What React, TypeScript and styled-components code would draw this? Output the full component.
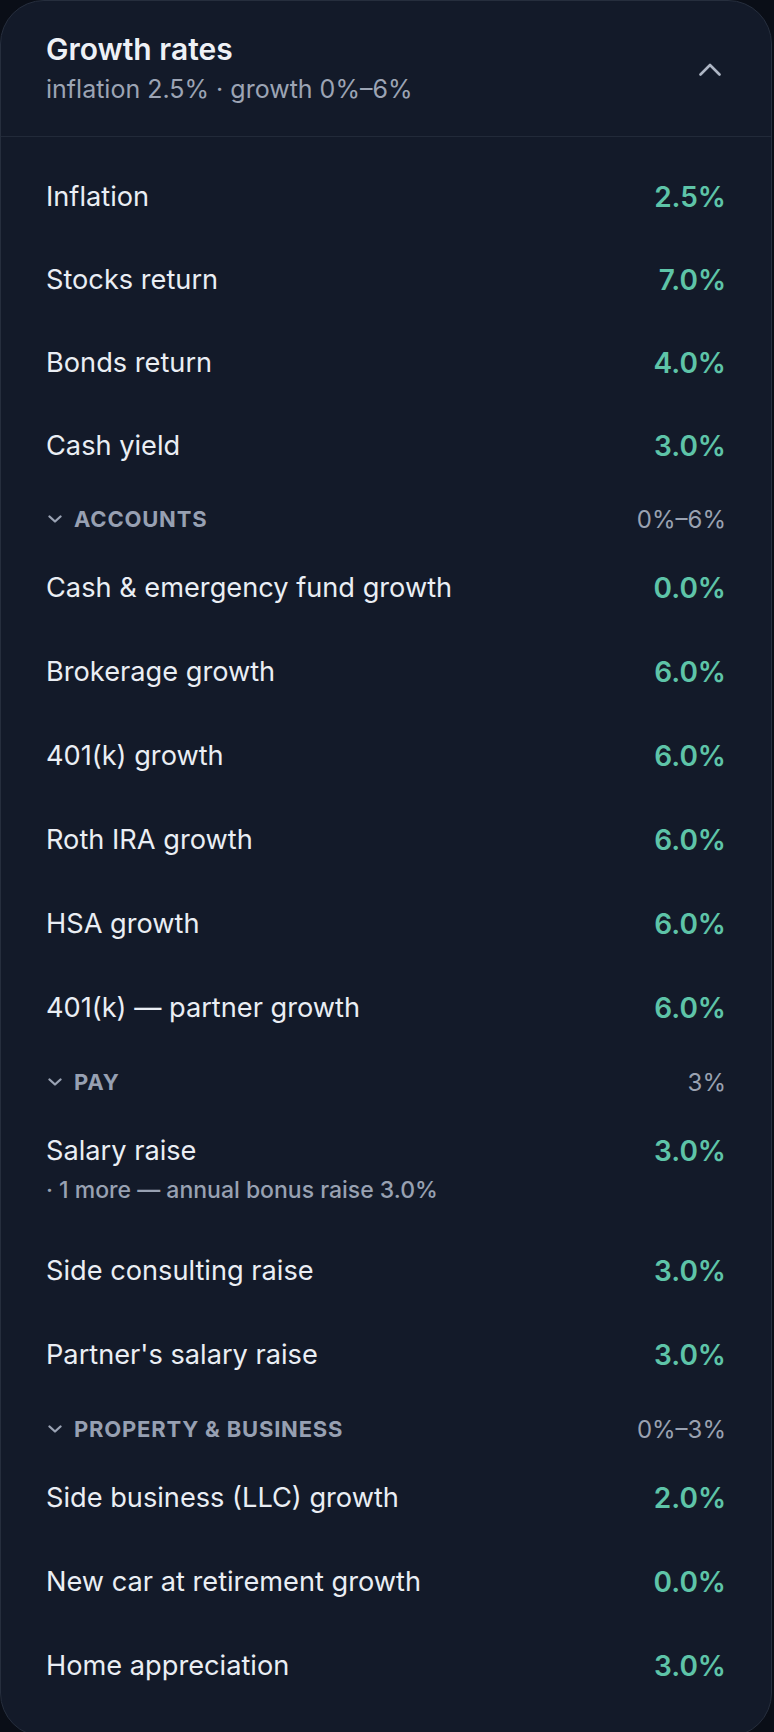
import React from "react";
import styled, { createGlobalStyle } from "styled-components";

type Rate = { label: string; value: string; note?: string };
type Section = { title: string; range: string; rates: Rate[] };

const topRates: Rate[] = [
  { label: "Inflation", value: "2.5%" },
  { label: "Stocks return", value: "7.0%" },
  { label: "Bonds return", value: "4.0%" },
  { label: "Cash yield", value: "3.0%" },
];

const sections: Section[] = [
  {
    title: "Accounts",
    range: "0%–6%",
    rates: [
      { label: "Cash & emergency fund growth", value: "0.0%" },
      { label: "Brokerage growth", value: "6.0%" },
      { label: "401(k) growth", value: "6.0%" },
      { label: "Roth IRA growth", value: "6.0%" },
      { label: "HSA growth", value: "6.0%" },
      { label: "401(k) — partner growth", value: "6.0%" },
    ],
  },
  {
    title: "Pay",
    range: "3%",
    rates: [
      {
        label: "Salary raise",
        value: "3.0%",
        note: "· 1 more — annual bonus raise 3.0%",
      },
      { label: "Side consulting raise", value: "3.0%" },
      { label: "Partner's salary raise", value: "3.0%" },
    ],
  },
  {
    title: "Property & Business",
    range: "0%–3%",
    rates: [
      { label: "Side business (LLC) growth", value: "2.0%" },
      { label: "New car at retirement growth", value: "0.0%" },
      { label: "Home appreciation", value: "3.0%" },
    ],
  },
];

function ChevronUp() {
  return (
    <svg width="22" height="13" viewBox="0 0 22 13" fill="none">
      <path
        d="M1.5 11.5 L11 2 L20.5 11.5"
        stroke="#aeb6c4"
        strokeWidth="2.6"
        strokeLinecap="round"
        strokeLinejoin="round"
      />
    </svg>
  );
}

function ChevronDown() {
  return (
    <svg width="14" height="8" viewBox="0 0 14 8" fill="none">
      <path
        d="M1.5 1.5 L7 6.5 L12.5 1.5"
        stroke="#9aa3b4"
        strokeWidth="2.3"
        strokeLinecap="round"
        strokeLinejoin="round"
      />
    </svg>
  );
}

function RateRow({ rate, tight }: { rate: Rate; tight?: boolean }) {
  return (
    <Row $tight={tight}>
      <LabelBox>
        <Label>{rate.label}</Label>
        {rate.note && <Note>{rate.note}</Note>}
      </LabelBox>
      <Value>{rate.value}</Value>
    </Row>
  );
}

export default function App() {
  return (
    <>
      <GlobalStyle />
      <Card>
        <Header>
          <HeaderText>
            <Title>Growth rates</Title>
            <Subtitle>inflation 2.5% · growth 0%–6%</Subtitle>
          </HeaderText>
          <ToggleBtn type="button" aria-label="Collapse">
            <ChevronUp />
          </ToggleBtn>
        </Header>
        <List>
          {topRates.map((r) => (
            <RateRow key={r.label} rate={r} tight />
          ))}
          {sections.map((s) => (
            <div key={s.title}>
              <SectionHead>
                <SectionToggle type="button">
                  <ChevronDown />
                  <SectionTitle>{s.title}</SectionTitle>
                </SectionToggle>
                <Range>{s.range}</Range>
              </SectionHead>
              {s.rates.map((r) => (
                <RateRow key={r.label} rate={r} />
              ))}
            </div>
          ))}
        </List>
      </Card>
    </>
  );
}

const GlobalStyle = createGlobalStyle`
  html, body {
    margin: 0;
    padding: 0;
    background: #0a0e17;
  }
  body {
    font-family: Inter, "Noto Sans", "Liberation Sans", sans-serif;
    -webkit-font-smoothing: antialiased;
  }
`;

const Card = styled.div`
  box-sizing: border-box;
  width: 772px;
  margin: 0 2px 2px 0;
  background: #131a29;
  border: 1px solid #262e3d;
  border-radius: 44px;
  overflow: hidden;
`;

const Header = styled.div`
  display: flex;
  align-items: center;
  justify-content: space-between;
  padding: 30px 45px 29px 45px;
  border-bottom: 1px solid #222a39;
`;

const HeaderText = styled.div`
  display: flex;
  flex-direction: column;
  gap: 4px;
`;

const Title = styled.div`
  font-size: 30px;
  line-height: 36px;
  font-weight: 600;
  color: #eef1f6;
`;

const Subtitle = styled.div`
  font-size: 25px;
  line-height: 36px;
  color: #9ca4b4;
`;

const ToggleBtn = styled.button`
  display: flex;
  align-items: center;
  justify-content: center;
  width: 32px;
  height: 40px;
  padding: 0;
  border: none;
  background: none;
`;

const List = styled.div`
  padding: 18px 45px 28px;
`;

const Row = styled.div<{ $tight?: boolean }>`
  display: flex;
  align-items: flex-start;
  justify-content: space-between;
  padding: ${(p) => (p.$tight ? "21.5px" : "22px")} 0;
`;

const LabelBox = styled.div`
  display: flex;
  flex-direction: column;
  gap: 3px;
`;

const Label = styled.div`
  font-size: 27.2px;
  line-height: 40px;
  color: #eaeef4;
`;

const Note = styled.div`
  font-size: 23px;
  line-height: 33px;
  font-weight: 500;
  color: #98a1b2;
`;

const Value = styled.div`
  font-size: 28px;
  line-height: 40px;
  font-weight: 600;
  color: #5ec4a8;
`;

const SectionHead = styled.div`
  display: flex;
  align-items: center;
  justify-content: space-between;
  padding: 14px 0 10px;
`;

const SectionToggle = styled.button`
  display: flex;
  align-items: center;
  gap: 12px;
  padding: 0 0 0 2px;
  border: none;
  background: none;
  font-family: inherit;
`;

const SectionTitle = styled.span`
  font-size: 22px;
  line-height: 32px;
  font-weight: 700;
  letter-spacing: 0.8px;
  text-transform: uppercase;
  color: #97a0b2;
`;

const Range = styled.span`
  font-size: 24px;
  line-height: 32px;
  padding-top: 3px;
  color: #9aa2b1;
`;
